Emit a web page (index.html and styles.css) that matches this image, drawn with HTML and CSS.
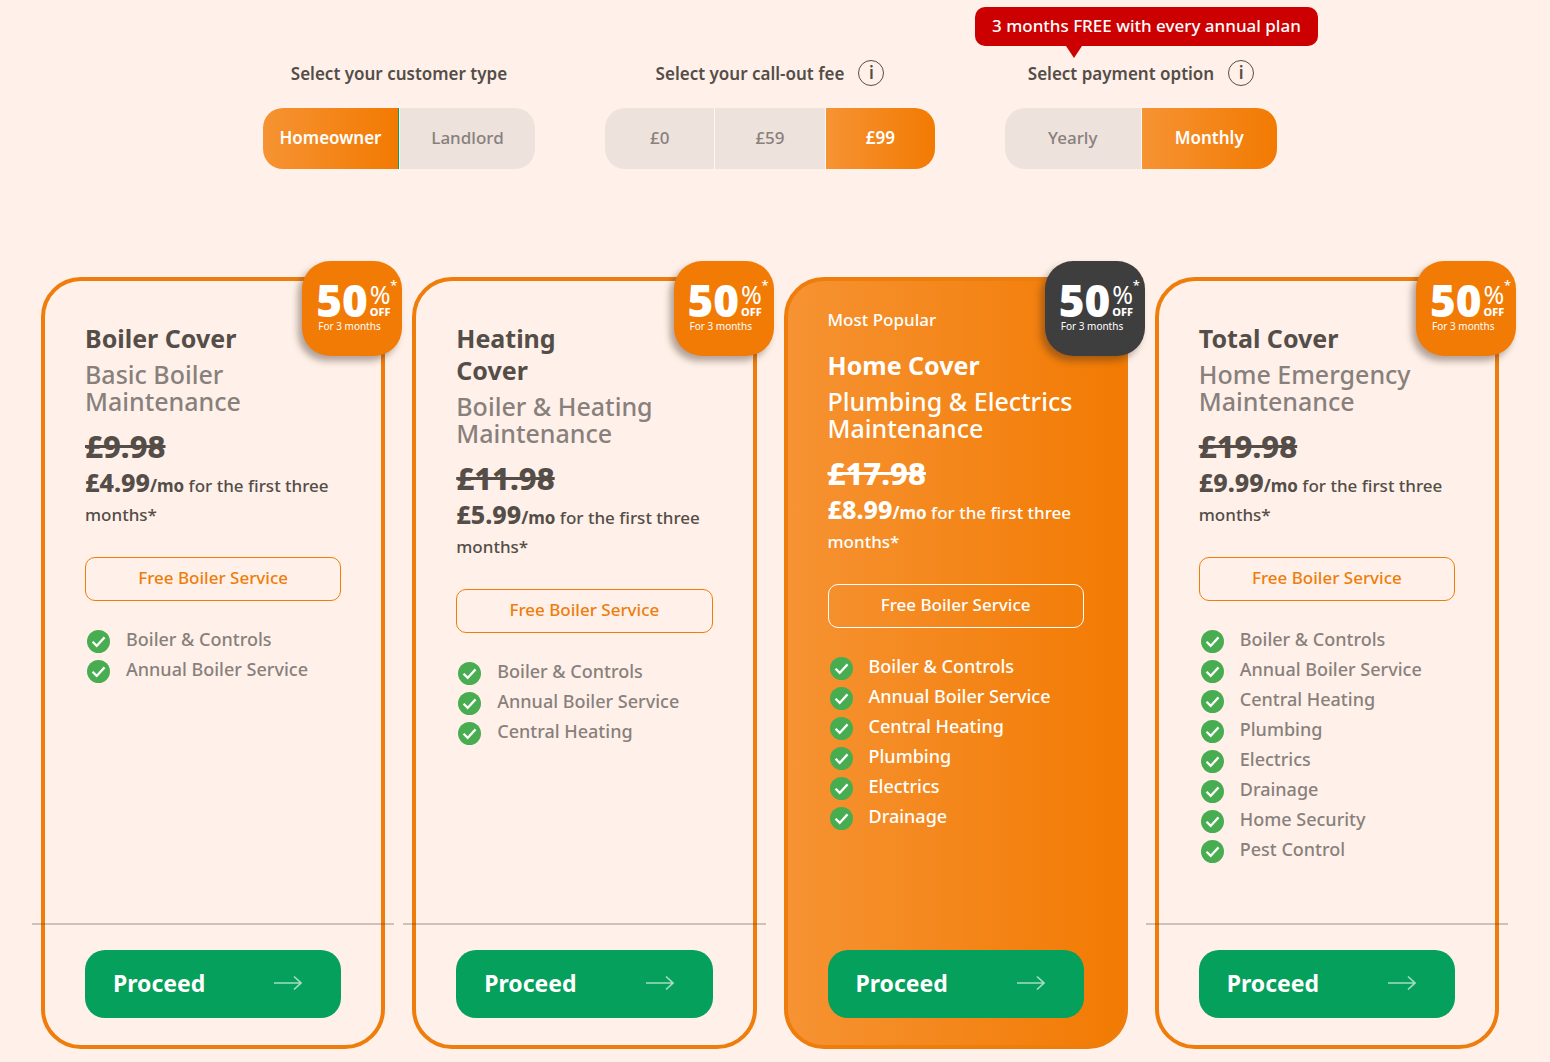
FILE: index.html
```
<!DOCTYPE html>
<html lang="en">
<head>
    <meta charset="UTF-8">
    <meta name="viewport" content="width=device-width, initial-scale=1">
    <title>Choose your cover</title>
    <link rel="stylesheet" href="styles.css">
</head>
<body>
  <svg class="sprite" aria-hidden="true">
    <symbol id="check" viewBox="0 0 24 24">
      <circle cx="12" cy="12" r="12" fill="#47ad50"/>
      <path d="M5.8 12.3l4.3 4.3 8.2-8.9" fill="none" stroke="#fff" stroke-width="2.4"/>
    </symbol>
    <symbol id="arrow" viewBox="0 0 28 16">
      <path d="M0 8h27M20 1.5L27 8l-7 6.5" fill="none" stroke="currentColor" stroke-width="1.7"/>
    </symbol>
  </svg>

  <form class="options">
    <div class="option" role="radiogroup" aria-labelledby="customer-title">
      <div class="option-title"><span id="customer-title">Select your customer type</span></div>
      <div class="toggle toggle-customer">
        <label><input type="radio" name="customer" checked><span>Homeowner</span></label>
        <label><input type="radio" name="customer"><span>Landlord</span></label>
      </div>
    </div>
    <div class="option option-wide" role="radiogroup" aria-labelledby="fee-title">
      <div class="option-title">
        <span id="fee-title">Select your call-out fee</span>
        <button type="button" class="info" aria-label="About the call-out fee">i</button>
      </div>
      <div class="toggle">
        <label><input type="radio" name="fee"><span>£0</span></label>
        <label><input type="radio" name="fee"><span>£59</span></label>
        <label><input type="radio" name="fee" checked><span>£99</span></label>
      </div>
    </div>
    <div class="option" role="radiogroup" aria-labelledby="payment-title">
      <div class="promo">3 months FREE with every annual plan</div>
      <div class="option-title">
        <span id="payment-title">Select payment option</span>
        <button type="button" class="info" aria-label="About payment options">i</button>
      </div>
      <div class="toggle">
        <label><input type="radio" name="payment"><span>Yearly</span></label>
        <label><input type="radio" name="payment" checked><span>Monthly</span></label>
      </div>
    </div>
  </form>

  <main class="plans">
    <section class="card">
      <div class="badge">
        <div class="badge-top"><b>50</b><span class="badge-side"><span>%</span><strong>OFF</strong></span><i>*</i></div>
        <small>For 3 months</small>
      </div>
      <h2>Boiler Cover</h2>
      <h3>Basic Boiler Maintenance</h3>
      <del>£9.98</del>
      <p class="price"><strong>£4.99</strong><b>/mo</b> for the first three months*</p>
      <div class="perk">Free Boiler Service</div>
      <ul>
        <li><svg><use href="#check"/></svg>Boiler &amp; Controls</li>
        <li><svg><use href="#check"/></svg>Annual Boiler Service</li>
      </ul>
      <hr>
      <button type="button" class="proceed">Proceed <svg><use href="#arrow"/></svg></button>
    </section>

    <section class="card">
      <div class="badge">
        <div class="badge-top"><b>50</b><span class="badge-side"><span>%</span><strong>OFF</strong></span><i>*</i></div>
        <small>For 3 months</small>
      </div>
      <h2>Heating<br>Cover</h2>
      <h3>Boiler &amp; Heating Maintenance</h3>
      <del>£11.98</del>
      <p class="price"><strong>£5.99</strong><b>/mo</b> for the first three months*</p>
      <div class="perk">Free Boiler Service</div>
      <ul>
        <li><svg><use href="#check"/></svg>Boiler &amp; Controls</li>
        <li><svg><use href="#check"/></svg>Annual Boiler Service</li>
        <li><svg><use href="#check"/></svg>Central Heating</li>
      </ul>
      <hr>
      <button type="button" class="proceed">Proceed <svg><use href="#arrow"/></svg></button>
    </section>

    <section class="card card-popular">
      <div class="badge">
        <div class="badge-top"><b>50</b><span class="badge-side"><span>%</span><strong>OFF</strong></span><i>*</i></div>
        <small>For 3 months</small>
      </div>
      <p class="popular">Most Popular</p>
      <h2>Home Cover</h2>
      <h3>Plumbing &amp; Electrics Maintenance</h3>
      <del>£17.98</del>
      <p class="price"><strong>£8.99</strong><b>/mo</b> for the first three months*</p>
      <div class="perk">Free Boiler Service</div>
      <ul>
        <li><svg><use href="#check"/></svg>Boiler &amp; Controls</li>
        <li><svg><use href="#check"/></svg>Annual Boiler Service</li>
        <li><svg><use href="#check"/></svg>Central Heating</li>
        <li><svg><use href="#check"/></svg>Plumbing</li>
        <li><svg><use href="#check"/></svg>Electrics</li>
        <li><svg><use href="#check"/></svg>Drainage</li>
      </ul>
      <hr>
      <button type="button" class="proceed">Proceed <svg><use href="#arrow"/></svg></button>
    </section>

    <section class="card">
      <div class="badge">
        <div class="badge-top"><b>50</b><span class="badge-side"><span>%</span><strong>OFF</strong></span><i>*</i></div>
        <small>For 3 months</small>
      </div>
      <h2>Total Cover</h2>
      <h3>Home Emergency Maintenance</h3>
      <del>£19.98</del>
      <p class="price"><strong>£9.99</strong><b>/mo</b> for the first three months*</p>
      <div class="perk">Free Boiler Service</div>
      <ul>
        <li><svg><use href="#check"/></svg>Boiler &amp; Controls</li>
        <li><svg><use href="#check"/></svg>Annual Boiler Service</li>
        <li><svg><use href="#check"/></svg>Central Heating</li>
        <li><svg><use href="#check"/></svg>Plumbing</li>
        <li><svg><use href="#check"/></svg>Electrics</li>
        <li><svg><use href="#check"/></svg>Drainage</li>
        <li><svg><use href="#check"/></svg>Home Security</li>
        <li><svg><use href="#check"/></svg>Pest Control</li>
      </ul>
      <hr>
      <button type="button" class="proceed">Proceed <svg><use href="#arrow"/></svg></button>
    </section>
  </main>
</body>
</html>
```
FILE: styles.css
```
*{
  margin:0;
  padding:0;
  box-sizing:border-box;
}
body{
  padding:58px 51px 13px 41px;
  background-color:#fff1e9;
  color:#544d48;
  font-family:"Noto Sans", sans-serif;
  font-size:17px;
  font-weight:500;
}
button{
  font-family:inherit;
  cursor:pointer;
}
.sprite{
  display:none;
}

/* options */
.options{
  display:flex;
  flex-wrap:wrap;
  justify-content:center;
  gap:20px 70px;
  margin-bottom:108px;
}
.option{
  position:relative;
  width:272px;
}
.option-wide{
  width:330px;
}
.option-title{
  display:flex;
  justify-content:center;
  align-items:center;
  gap:14px;
  height:30px;
  margin-bottom:20px;
  font-weight:600;
  white-space:nowrap;
}
.info{
  width:26px;
  height:26px;
  border:1px solid #544d48;
  border-radius:50%;
  background:none;
  color:#544d48;
  font-size:17px;
  font-weight:600;
  line-height:22px;
}
.toggle{
  display:flex;
  gap:1px;
  height:61px;
  border-radius:20px;
  overflow:hidden;
  background-color:#fff8f4;
}
.toggle label{
  flex:1;
  position:relative;
  cursor:pointer;
}
.toggle input{
  position:absolute;
  opacity:0;
}
.toggle span{
  display:flex;
  justify-content:center;
  align-items:center;
  height:100%;
  padding-bottom:2px;
  background-color:#ede2dc;
  color:#88807c;
}
.toggle input:checked + span{
  background:linear-gradient(90deg, #f69333, #f27a02);
  color:#fff;
  font-weight:600;
}
.toggle-customer label:first-child{
  border-right:1px solid #04a05c;
}
.promo{
  position:absolute;
  left:-30px;
  bottom:100%;
  margin-bottom:12px;
  padding:0 17px 2px;
  border-radius:10px;
  background-color:#cc0000;
  color:#fff;
  line-height:37px;
  white-space:nowrap;
}
.promo::after{
  content:"";
  position:absolute;
  top:100%;
  left:91px;
  border:8px solid transparent;
  border-top:12px solid #cc0000;
  border-bottom:0;
}

/* plan cards */
.plans{
  display:grid;
  grid-template-columns:repeat(auto-fit, minmax(320px, 1fr));
  gap:27px;
}
.card{
  position:relative;
  display:flex;
  flex-direction:column;
  padding:41px 40px 27px;
  border:4px solid #ee7d0c;
  border-radius:40px;
}
.card h2{
  font-size:25px;
  font-weight:700;
  line-height:32px;
  margin-bottom:7px;
}
.card h3{
  color:#88807c;
  font-size:25px;
  font-weight:500;
  line-height:27px;
  margin-bottom:12px;
}
.card del{
  font-size:31px;
  font-weight:800;
  line-height:38px;
  margin-bottom:3px;
}
.price{
  line-height:29px;
  margin-bottom:28px;
}
.price strong{
  font-size:25px;
  font-weight:800;
}
.price b{
  font-weight:700;
}
.perk{
  padding-bottom:2px;
  border:1px solid #ee7d0c;
  border-radius:10px;
  color:#ee7d0c;
  line-height:40px;
  text-align:center;
  margin-bottom:23px;
}
.card ul{
  list-style:none;
  margin-bottom:59px;
}
.card li{
  display:flex;
  align-items:center;
  gap:16px;
  padding-left:2px;
  color:#88807c;
  font-size:18px;
  line-height:30px;
}
.card li svg{
  width:23px;
  height:23px;
  margin-top:4px;
}
.card hr{
  margin:auto -53px 25px;
  border:0;
  border-top:2px solid rgba(80, 60, 60, .27);
}
.proceed{
  display:flex;
  justify-content:space-between;
  align-items:center;
  height:68px;
  padding:0 39px 2px 28px;
  border:0;
  border-radius:20px;
  background-color:#04a05c;
  color:#fff;
  font-size:23px;
  font-weight:700;
}
.proceed svg{
  width:28px;
  height:16px;
  color:#a5dcc2;
}

/* most popular plan */
.card-popular{
  padding-top:27px;
  background:linear-gradient(90deg, #f69333, #f27a02) border-box;
  color:#fff;
}
.popular{
  line-height:24px;
  margin-bottom:17px;
}
.card-popular h3,
.card-popular li,
.card-popular .perk{
  color:#fff;
}
.card-popular .perk{
  border-color:#fff;
}
.card-popular hr{
  border-color:transparent;
}
.card-popular .badge{
  background-color:#3f3e3f;
}

/* discount badge */
.badge{
  position:absolute;
  top:-20px;
  right:-21px;
  width:100px;
  height:95px;
  padding:17px 9px 0 14px;
  border-radius:28px;
  background-color:#f27b05;
  box-shadow:-4px 5px 7px rgba(60, 40, 30, .4);
  color:#fff;
}
.badge-top{
  position:relative;
  display:flex;
  gap:2px;
  height:41px;
}
.badge b{
  font-size:44px;
  font-weight:900;
  line-height:44px;
}
.badge-side{
  display:flex;
  flex-direction:column;
  font-size:25px;
  font-weight:400;
  line-height:24px;
  padding-top:4px;
}
.badge-side strong{
  font-size:11px;
  font-weight:800;
  line-height:11px;
}
.badge i{
  position:absolute;
  right:-4px;
  top:1px;
  font-size:13px;
  font-style:normal;
  line-height:12px;
}
.badge small{
  display:block;
  padding-left:2px;
  font-size:10px;
  font-weight:400;
  line-height:14px;
  white-space:nowrap;
}
```
